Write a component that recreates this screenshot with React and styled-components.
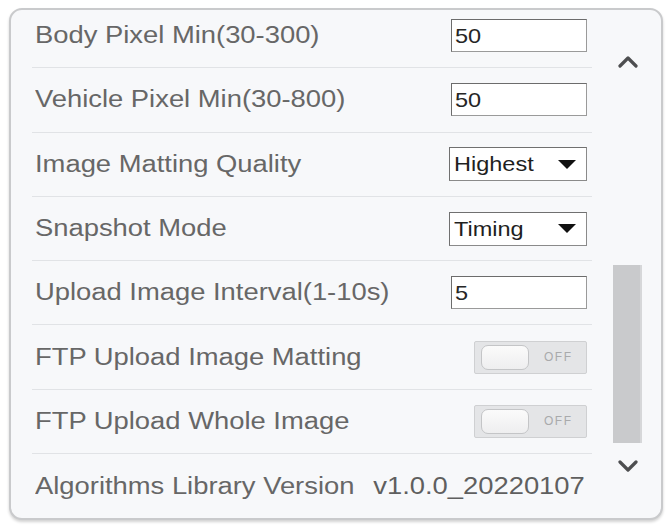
import React from "react";
import styled, { createGlobalStyle } from "styled-components";

const GlobalStyle = createGlobalStyle`
  html, body { margin: 0; padding: 0; background: #ffffff; }
  * { box-sizing: border-box; }
`;

const Page = styled.div`
  width: 670px;
  height: 526px;
  padding: 8px 7px 6px 9px;
  font-family: "Liberation Sans", Arial, sans-serif;
`;

const Panel = styled.div`
  width: 654px;
  height: 512px;
  display: flex;
  border: 2px solid #c9cacc;
  border-radius: 13px;
  background: #f7f8fa;
  box-shadow: 0 2px 3px rgba(0, 0, 0, 0.18);
  overflow: hidden;
`;

const Viewport = styled.div`
  width: 581px;
  padding-left: 21px;
  overflow: hidden;
`;

const List = styled.div`
  width: 560px;
  margin-top: -6px;
`;

const Row = styled.div`
  height: 64.3px;
  display: flex;
  align-items: center;
  justify-content: space-between;
  padding: 0 5px 0 3px;
  border-bottom: 1px solid #e1e3e6;
  &:last-child { border-bottom: none; }
`;

const Label = styled.span`
  font-size: 23px;
  color: #676767;
  white-space: nowrap;
  display: inline-block;
  transform: scaleX(1.19);
  transform-origin: left center;
`;

const Value = styled.span`
  font-size: 23px;
  color: #5f5f5f;
  white-space: nowrap;
  display: inline-block;
  transform: scaleX(1.19);
  transform-origin: right center;
  margin-right: 2px;
`;

const TextBox = styled.div`
  width: 136px;
  height: 33px;
  background: #ffffff;
  border: 1px solid #9a9a9a;
  border-top-color: #6c6c6c;
  border-left-color: #6c6c6c;
  display: flex;
  align-items: center;
  padding-left: 3px;
  color: #262626;
`;

const BoxText = styled.span`
  font-size: 21px;
  display: inline-block;
  transform: scaleX(1.12);
  transform-origin: left center;
`;

const SelectBox = styled.div`
  width: 138px;
  height: 34px;
  background: #ffffff;
  border: 1px solid #8a8a8a;
  border-top-color: #707070;
  border-left-color: #707070;
  display: flex;
  align-items: center;
  justify-content: space-between;
  padding: 0 10px 0 4px;
  color: #1f1f1f;
`;

const Toggle = styled.div`
  width: 113px;
  height: 33px;
  background: #e4e5e7;
  border: 1px solid #cfd0d2;
  border-radius: 2px;
  display: flex;
  align-items: center;
  padding-left: 6px;
`;

const Knob = styled.div`
  width: 48px;
  height: 25px;
  border-radius: 7px;
  border: 1px solid #c4c5c7;
  background: linear-gradient(#fbfbfb, #eeeeef);
`;

const ToggleText = styled.span`
  margin-left: 15px;
  font-size: 12px;
  letter-spacing: 1.5px;
  color: #a9aaac;
`;

const ScrollColumn = styled.div`
  margin-left: 13px;
  width: 45px;
  display: flex;
  flex-direction: column;
  padding-left: 8px;
`;

const ArrowButton = styled.div`
  height: 32px;
  width: 29px;
  display: flex;
  align-items: center;
  justify-content: center;
  margin-top: ${(p) => (p.$down ? "0" : "36px")};
  margin-bottom: ${(p) => (p.$down ? "36px" : "0")};
`;

const Track = styled.div`
  flex: 1;
  width: 29px;
  position: relative;
`;

const Thumb = styled.div`
  position: absolute;
  left: 0;
  width: 29px;
  background: #c9cacc;
  border-right: 2px solid #d6d7d9;
`;

const Chevron = ({ down }) => (
  <svg width="20" height="12" viewBox="0 0 20 12">
    <polyline
      points={down ? "2,2 10,10 18,2" : "2,10 10,2 18,10"}
      fill="none"
      stroke="#4d4e50"
      strokeWidth="3.2"
      strokeLinecap="round"
      strokeLinejoin="round"
    />
  </svg>
);

const Caret = () => (
  <svg width="18" height="9" viewBox="0 0 18 9">
    <polygon points="0,0 18,0 9,9" fill="#111" />
  </svg>
);

const rows = [
  { label: "Body Pixel Min(30-300)", kind: "text", value: "50" },
  { label: "Vehicle Pixel Min(30-800)", kind: "text", value: "50" },
  { label: "Image Matting Quality", kind: "select", value: "Highest" },
  { label: "Snapshot Mode", kind: "select", value: "Timing" },
  { label: "Upload Image Interval(1-10s)", kind: "text", value: "5" },
  { label: "FTP Upload Image Matting", kind: "toggle" },
  { label: "FTP Upload Whole Image", kind: "toggle" },
  { label: "Algorithms Library Version", kind: "value", value: "v1.0.0_20220107" },
];

const Control = ({ row }) => {
  if (row.kind === "text")
    return (
      <TextBox>
        <BoxText>{row.value}</BoxText>
      </TextBox>
    );
  if (row.kind === "select")
    return (
      <SelectBox>
        <BoxText>{row.value}</BoxText>
        <Caret />
      </SelectBox>
    );
  if (row.kind === "toggle")
    return (
      <Toggle>
        <Knob />
        <ToggleText>OFF</ToggleText>
      </Toggle>
    );
  return <Value>{row.value}</Value>;
};

export default function App() {
  const thumbTop = 187;
  const thumbHeight = 178;
  return (
    <>
      <GlobalStyle />
      <Page>
        <Panel>
          <Viewport>
            <List>
              {rows.map((r) => (
                <Row key={r.label}>
                  <Label>{r.label}</Label>
                  <Control row={r} />
                </Row>
              ))}
            </List>
          </Viewport>
          <ScrollColumn>
            <ArrowButton>
              <Chevron />
            </ArrowButton>
            <Track>
              <Thumb style={{ top: thumbTop, height: thumbHeight }} />
            </Track>
            <ArrowButton $down>
              <Chevron down />
            </ArrowButton>
          </ScrollColumn>
        </Panel>
      </Page>
    </>
  );
}
